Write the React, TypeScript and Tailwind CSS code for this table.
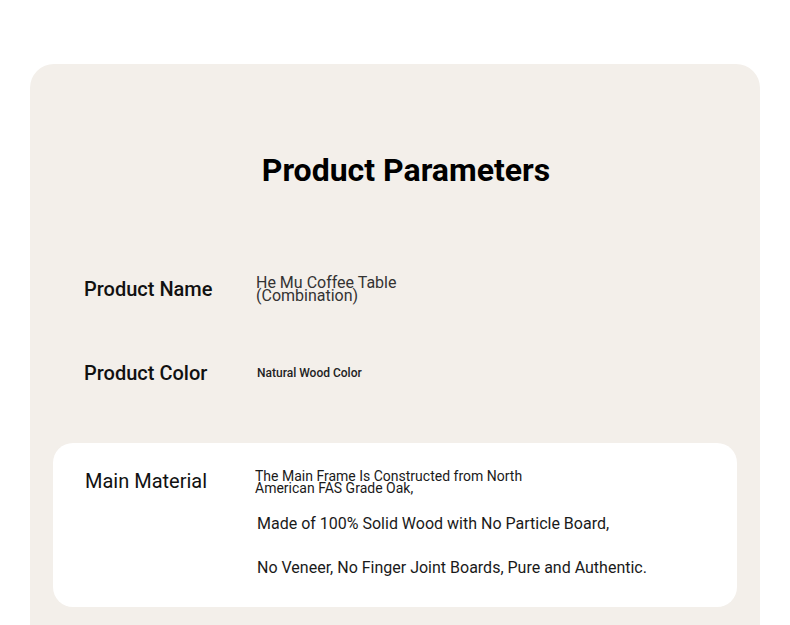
export default function App() {
  return (
    <div className="min-h-screen bg-white pt-16 px-[30px] font-['Roboto',sans-serif]">
      <div className="rounded-t-[24px] bg-[#f3efea] pb-10">
        <h1 className="pl-[22px] pt-[86px] text-center text-[32px] font-bold leading-[40px] text-black">
          Product Parameters
        </h1>

        <div className="mt-[86px] grid grid-cols-[172px_1fr] items-center pl-[54px]">
          <div className="text-[20px] font-medium leading-6 text-[#111]">Product Name</div>
          <div className="text-[16px] leading-[13px] text-[#333]">
            He Mu Coffee Table
            <br />
            (Combination)
          </div>
        </div>

        <div className="mt-[59px] grid grid-cols-[173px_1fr] items-center pl-[54px]">
          <div className="text-[20px] font-medium leading-6 text-[#111]">Product Color</div>
          <div className="text-[12px] font-medium leading-4 text-[#222]">Natural Wood Color</div>
        </div>

        <div className="mx-[23px] mt-[58px] rounded-[20px] bg-white pb-[29px] pl-8 pt-[27px]">
          <div className="grid grid-cols-[170px_1fr]">
            <div className="-mt-[1px] text-[20px] leading-6 text-[#111]">Main Material</div>
            <div className="text-[#1a1a1a]">
              <div className="text-[14px] leading-[12px]">
                The Main Frame Is Constructed from North
                <br />
                American FAS Grade Oak,
              </div>
              <div className="mt-[20px] pl-[2px] text-[16px] leading-5">
                Made of 100% Solid Wood with No Particle Board,
              </div>
              <div className="mt-6 pl-[2px] text-[16px] leading-5">
                No Veneer, No Finger Joint Boards, Pure and Authentic.
              </div>
            </div>
          </div>
        </div>
      </div>
    </div>
  );
}
